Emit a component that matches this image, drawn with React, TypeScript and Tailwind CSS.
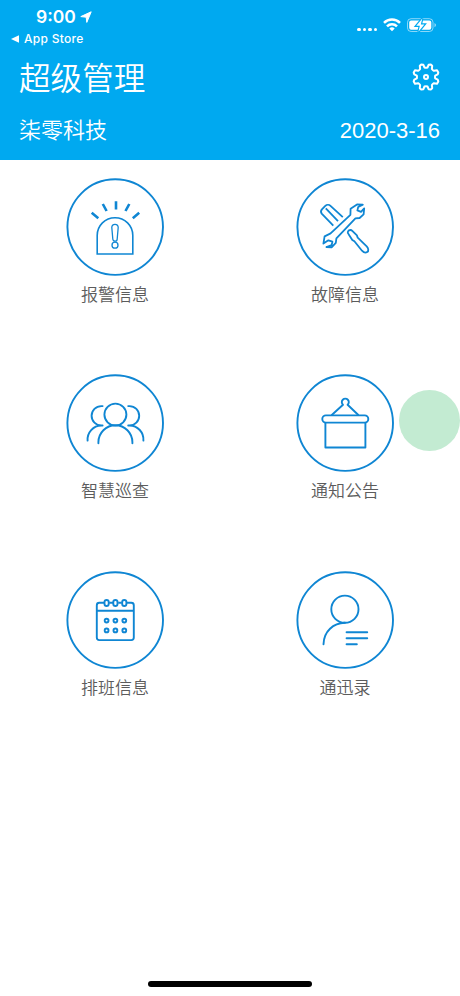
import React from "react";

const SANS = "font-['Liberation_Sans','Noto_Sans_CJK_SC',sans-serif]";

function AlarmIcon() {
  return (
    <>
      <path strokeWidth="1.6" d="M31.2 76V57.5a17.8 17.8 0 0 1 35.6 0V76Z" />
      <path strokeWidth="1.3" d="M45.8 49.5a3.2 3.2 0 0 1 6.4 0l-1 11.5a2.2 2.2 0 0 1-4.4 0Z" />
      <circle strokeWidth="1.3" cx="49" cy="67.2" r="3" />
      <path strokeWidth="2.6" d="M25.7 34.8l6.6 5.4M36.8 26l3.8 7M50 23.3v8.2M63.3 26l-3.8 7M73.2 34.8l-6.4 5.4" />
    </>
  );
}

function ToolsIcon() {
  return (
    <g strokeWidth="1.8" strokeLinejoin="round">
      <path d="M37.3 47.6 25.7 35.6c-1.2-1.600-.8-3 .2-4.200l3.400-3.500c1.400-1.300 3.800-1.400 5.200-.1L46.800 39.200" />
      <path d="M29.8 30.400 42 43.200" />
      <path d="M66.8 26.600 61 26.400 54.600 30.800 54.400 36.800 34.600 55.400 28.600 58.400 27.400 65.600 32.400 62.300 36.400 63.700 35.600 67.200 30.400 69 35.600 69.400 39.800 64.800 40.400 60.400 59.400 40.400 63.600 40 67.600 36.400 68.200 30.400 65 33.800 61.400 32.400 62.200 29Z" />
      <path d="M52.6 56.2c-1.8-1.8-.4-4.2 1.8-4.2.8 0 1.4.4 1.9.9l4.6 4.5.8 2.3 9 8.6c1.8 1.9 2.2 4.7.5 5.8-1.5 1-3.8.2-5.2-1.4l-7.6-9.4-2.1-1.4Z" />
    </g>
  );
}

function PatrolIcon() {
  return (
    <g strokeWidth="1.9" strokeLinecap="round">
      <circle cx="49.4" cy="40.6" r="11" />
      <path d="M32.4 69.3v-1a17 17 0 0 1 34 0v1" />
      <path d="M36.6 32.1h-1.3a9.7 9.7 0 0 0 0 19.4h1.3M35.3 51.5A14 14 0 0 0 21.6 66.6" />
      <path d="M62.2 32.1h1.3a9.7 9.7 0 0 1 0 19.4h-1.3M63.5 51.5a14 14 0 0 1 13.9 15.1" />
    </g>
  );
}

function NoticeIcon() {
  return (
    <g strokeWidth="1.9" strokeLinejoin="round">
      <rect x="26.3" y="41.4" width="46" height="7.2" rx="3.6" />
      <path d="M29.4 48.6v24.9h40V48.6" />
      <path d="M35.5 41.2 47 30.8a3.5 3.5 0 1 1 4.6 0L62.6 41.2" />
    </g>
  );
}

function CalendarIcon() {
  return (
    <g strokeWidth="1.9">
      <path d="M38 31.7h-4.7a2.5 2.5 0 0 0-2.5 2.5v32.4a2.5 2.5 0 0 0 2.5 2.5h32a2.5 2.5 0 0 0 2.5-2.5V34.2a2.5 2.5 0 0 0-2.5-2.5H61M43.2 31.7H47M52.2 31.7h3.6M30.8 39.7h37" />
      {[40.6, 49.4, 58.3].map((x) => (
        <React.Fragment key={x}>
          <rect x={x - 2.1} y="29" width="4.2" height="6" rx="2.1" />
          <circle cx={x} cy="49.6" r="1.9" />
          <circle cx={x} cy="59.4" r="1.9" />
        </React.Fragment>
      ))}
    </g>
  );
}

function ContactsIcon() {
  return (
    <g strokeWidth="1.9" strokeLinecap="round">
      <circle cx="48.9" cy="38.2" r="13.6" />
      <path d="M48.9 51.8c-11.5.3-21.1 8.5-21.4 21.5" />
      <path strokeWidth="2" d="M50.6 61.2h20.6M50.6 67.2h20.6M50.6 73.3h10.2" />
    </g>
  );
}

const MENU = [
  { label: "报警信息", icon: AlarmIcon },
  { label: "故障信息", icon: ToolsIcon },
  { label: "智慧巡查", icon: PatrolIcon },
  { label: "通知公告", icon: NoticeIcon },
  { label: "排班信息", icon: CalendarIcon },
  { label: "通迅录", icon: ContactsIcon },
];

// gear outline with eight rounded teeth
function GearIcon() {
  return (
    <svg className="mb-[2px]" width="28" height="28" viewBox="0 0 28 28" fill="none" stroke="currentColor" strokeWidth="2" strokeLinejoin="round">
      <path d="M9.2 1.6 11.4 1.8l1.1 2.7q1.5.6 3 0l1.1-2.7 2.2-.2 1.4 1.2-.3 3.1q.8 1.3 2 1.9l3.1-.5 1.3 2.3-.6 1.7-2.5 1.3q-.4 1.4 0 2.8l2.5 1.3.6 1.7-1.3 2.3-3.1-.5q-1.2.6-2 1.9l.3 3.1-1.4 1.2-2.2-.2-1.1-2.7q-1.5-.6-3 0l-1.1 2.7-2.2.2-1.4-1.2.3-3.1q-.8-1.3-2-1.9l-3.1.5-1.3-2.3.6-1.7 2.5-1.3q.4-1.4 0-2.8l-2.5-1.3-.6-1.7 1.3-2.3 3.1.5q1.2-.6 2-1.9l-.3-3.1Z" />
      <circle cx="14" cy="14" r="2" />
    </svg>
  );
}

function StatusBar() {
  return (
    <div className="flex h-12 justify-between text-white font-['Inter',sans-serif]">
      <div className="pl-[11px] pt-[7px]">
        <div className="flex items-center gap-1 pl-[25px] leading-5">
          <span className="text-[17.5px] font-semibold">9:00</span>
          <svg width="12" height="12" viewBox="0 0 12 12" fill="currentColor" stroke="currentColor" strokeLinejoin="round">
            <path d="M11.2.8.8 5.6l5.400.600.600 5.200Z" />
          </svg>
        </div>
        <div className="flex items-center gap-[5px] text-[12px] font-medium leading-[23px] tracking-[0.3px]">
          <svg width="8" height="8" viewBox="0 0 8 8" fill="currentColor">
            <path d="M0 4 8 .3v7.4Z" />
          </svg>
          App Store
        </div>
      </div>
      <div className="mt-[16px] flex h-[17px] items-center pr-[23px]">
        <div className="flex gap-[2.2px] pt-[10px]">
          {[0, 1, 2, 3].map((dot) => (
            <i key={dot} className="size-[3.3px] rounded-full bg-white" />
          ))}
        </div>
        <svg className="ml-[6px]" width="18" height="14" viewBox="0 0 18 14" fill="none" stroke="currentColor" strokeWidth="2.5">
          <path d="M1 4.9a11.3 11.3 0 0 1 16 0M4 8.3a7 7 0 0 1 10 0" />
          <path d="m9 13.3-2.7-2.8a4 4 0 0 1 5.4 0Z" fill="currentColor" stroke="none" />
        </svg>
        <svg className="ml-[6px]" width="30" height="14" viewBox="0 0 30 14" fill="none">
          <rect x=".5" y=".7" width="25.5" height="12.8" rx="3.6" stroke="currentColor" strokeOpacity=".55" />
          <rect x="2.2" y="2.4" width="22.1" height="9.4" rx="2" fill="currentColor" />
          <path d="M27.5 5v4.2q1.5-.8 1.5-2.1T27.5 5Z" fill="currentColor" fillOpacity=".6" />
          <path d="m15.3.5-6 7.3h3.6l-1.5 6 6-7.3h-3.6Z" fill="#00a9f0" stroke="#00a9f0" strokeWidth="2.4" />
          <path d="m15.3.5-6 7.3h3.6l-1.5 6 6-7.3h-3.6Z" fill="currentColor" />
        </svg>
      </div>
    </div>
  );
}

export default function App() {
  return (
    <div className={`relative flex h-[996px] w-[460px] flex-col overflow-hidden bg-white ${SANS}`}>
      <header className="h-40 bg-[#00a9f0] text-white">
        <StatusBar />
        <div className="flex h-[60px] items-center justify-between pl-[19px] pr-5">
          <h1 className="pt-1 text-[31.6px] font-[350] leading-none">超级管理</h1>
          <GearIcon />
        </div>
        <div className="flex h-11 items-center justify-between pl-[19px] pr-5 text-[22px]">
          <span className="pt-px font-[350]">柒零科技</span>
          <span>2020-3-16</span>
        </div>
      </header>

      <main className="grid auto-rows-[196.3px] grid-cols-2 pt-[18px]">
        {MENU.map(({ label, icon: Icon }) => (
          <div key={label} className="flex flex-col items-center">
            <svg width="98" height="98" viewBox="0 0 98 98" fill="none" stroke="#0f86d3">
              <circle cx="49.2" cy="49.1" r="47.8" strokeWidth="1.9" />
              <Icon />
            </svg>
            <span className="mt-2 text-[17px] font-[350] leading-6 text-[#5c5c5c]">{label}</span>
          </div>
        ))}
      </main>

      <div className="absolute left-[398.500px] top-[390px] size-[61px] rounded-full bg-[#c3ebd2]" />
      <div className="mx-auto mb-[9px] mt-auto h-[6px] w-[164px] rounded-full bg-black" />
    </div>
  );
}
